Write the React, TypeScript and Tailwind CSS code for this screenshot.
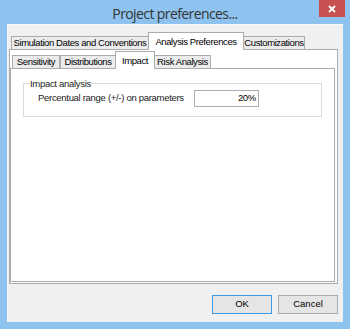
import React from "react";

const font = { fontFamily: '"Liberation Sans", Arial, sans-serif' };

function OuterTab({ label, w, selected }: { label: string; w: number; selected?: boolean }) {
  return (
    <div
      style={{ width: w }}
      className={
        selected
          ? "relative z-10 -mx-[1px] mb-[-1px] flex h-[18px] items-start justify-center border border-b-0 border-[#acacac] bg-white pt-[2px] text-[9.5px] tracking-[-0.4px] text-black"
          : "flex h-[13px] items-center justify-center border border-b-0 border-[#acacac] bg-[#ececec] text-[9.5px] tracking-[-0.4px] text-black"
      }
    >
      {label}
    </div>
  );
}

export default function App() {
  return (
    <div style={font} className="flex h-[329px] w-[350px] flex-col bg-[#8ec3f0]">
      <div className="relative flex h-[24px] items-center justify-center">
        <span
          style={{ fontFamily: '"Open Sans", "Noto Sans", sans-serif' }}
          className="pt-[2px] text-[14px] tracking-[-0.6px] text-[#333]"
        >
          Project preferences...
        </span>
        <div className="absolute right-[5px] top-0 flex h-[17px] w-[26px] items-center justify-center bg-[#c75050]">
          <svg width="8" height="8" viewBox="0 0 8 8">
            <path d="M1 1 L7 7 M7 1 L1 7" stroke="white" strokeWidth="1.8" />
          </svg>
        </div>
      </div>
      <div className="mx-[7px] mb-[7px] flex flex-1 flex-col border-l border-t border-[#f8f8f8] bg-[#f0f0f0] pl-[1px] pr-[5px] pt-[7px]">
        <div className="flex h-[17px] items-end pl-[2px]">
          <OuterTab label="Simulation Dates and Conventions" w={138} />
          <OuterTab label="Analysis Preferences" w={96} selected />
          <OuterTab label="Customizations" w={62} />
        </div>
        <div className="flex h-[235px] flex-col border border-[#acacac] bg-white pr-[2px] pt-[1px] pb-[1px]">
          <div className="flex h-[17px] items-end pl-[2px]">
            <OuterTab label="Sensitivity" w={48} />
            <OuterTab label="Distributions" w={56} />
            <OuterTab label="Impact" w={40} selected />
            <OuterTab label="Risk Analysis" w={57} />
          </div>
          <div className="flex-1 border border-[#acacac] bg-white px-[12px] pt-[9px]">
            <fieldset className="h-[39px] border border-[#dcdcdc] pl-[6px] pr-[6px]">
              <legend className="text-[9.5px] tracking-[-0.3px] text-[#222] leading-[11px]">Impact analysis</legend>
              <div className="flex items-center pl-[8px] pt-[1px]">
                <span className="w-[156px] text-[9.5px] tracking-[-0.3px] text-[#222]">Percentual range (+/-) on parameters</span>
                <div className="flex h-[17px] w-[65px] items-center justify-end border border-[#abadb3] bg-white pr-[2px] text-[9.5px] tracking-[-0.3px] text-black">
                  20%
                </div>
              </div>
            </fieldset>
          </div>
        </div>
        <div className="mt-[11px] flex justify-end gap-[6px]">
          <button className="flex h-[19px] w-[60px] items-center justify-center border border-[#3c9be6] bg-[#e5e5e5] text-[9.5px] text-black">
            OK
          </button>
          <button className="flex h-[19px] w-[60px] items-center justify-center border border-[#acacac] bg-[#e5e5e5] text-[9.5px] text-black">
            Cancel
          </button>
        </div>
      </div>
    </div>
  );
}
